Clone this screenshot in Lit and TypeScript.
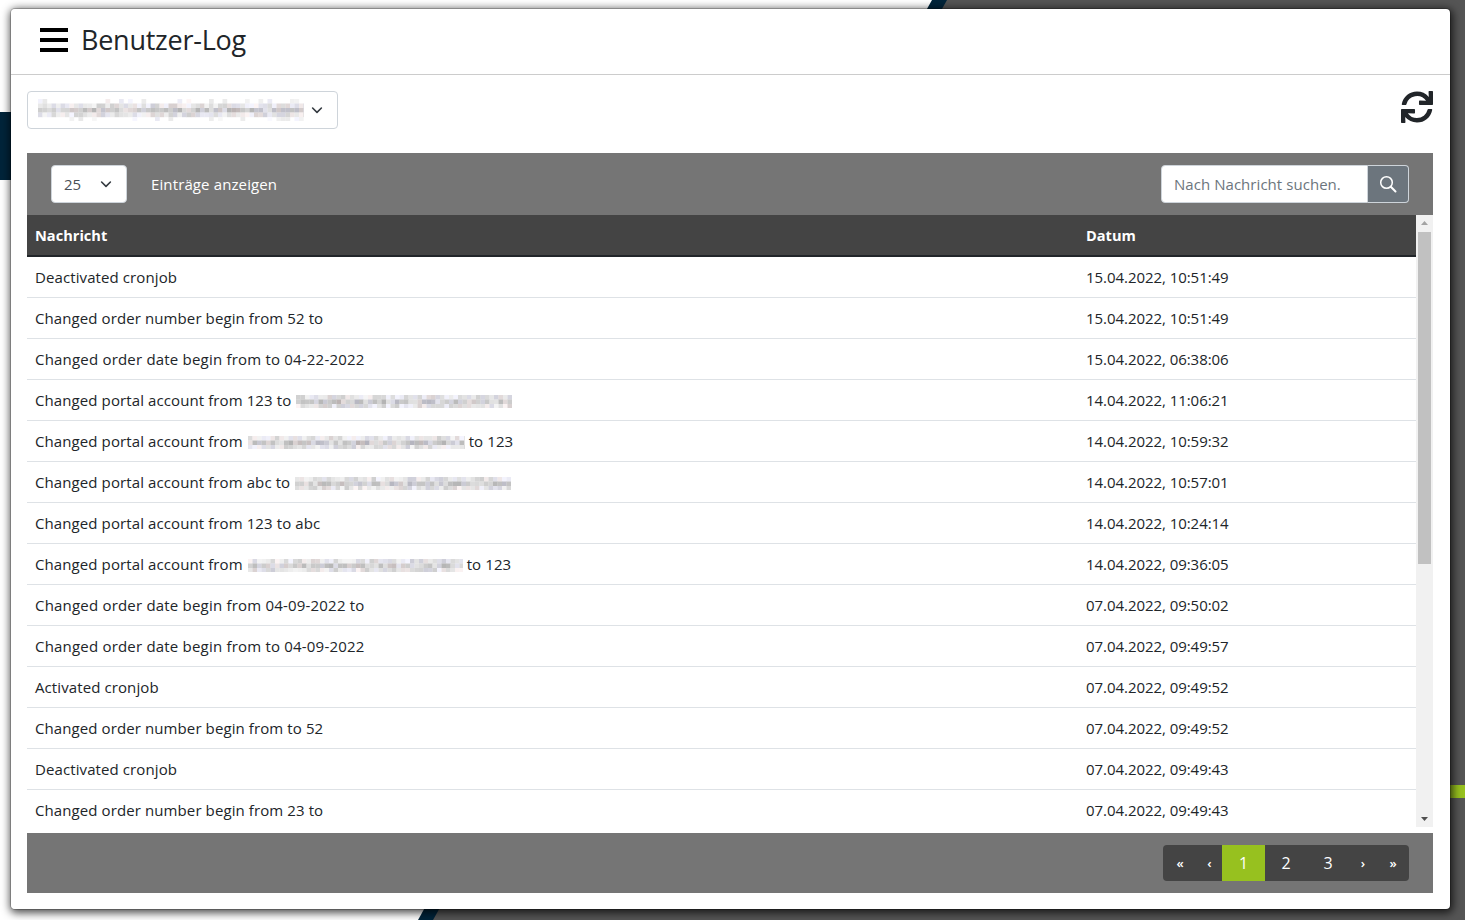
import { LitElement, html, css, svg } from "lit";
import { customElement } from "lit/decorators.js";
import { classMap } from "lit/directives/class-map.js";

type Part = string | { blur: number };
interface Row { m: Part[]; d: string; wide?: boolean }

const ROWS: Row[] = [
  { m: ["Deactivated cronjob"], d: "15.04.2022, 10:51:49" },
  { m: ["Changed order number begin from 52 to"], d: "15.04.2022, 10:51:49" },
  { m: ["Changed order date begin from to 04-22-2022"], d: "15.04.2022, 06:38:06", wide: true },
  { m: ["Changed portal account from 123 to ", { blur: 216 }], d: "14.04.2022, 11:06:21" },
  { m: ["Changed portal account from ", { blur: 217 }, " to 123"], d: "14.04.2022, 10:59:32" },
  { m: ["Changed portal account from abc to ", { blur: 216 }], d: "14.04.2022, 10:57:01" },
  { m: ["Changed portal account from 123 to abc"], d: "14.04.2022, 10:24:14" },
  { m: ["Changed portal account from ", { blur: 215 }, " to 123"], d: "14.04.2022, 09:36:05" },
  { m: ["Changed order date begin from 04-09-2022 to"], d: "07.04.2022, 09:50:02", wide: true },
  { m: ["Changed order date begin from to 04-09-2022"], d: "07.04.2022, 09:49:57", wide: true },
  { m: ["Activated cronjob"], d: "07.04.2022, 09:49:52" },
  { m: ["Changed order number begin from to 52"], d: "07.04.2022, 09:49:52" },
  { m: ["Deactivated cronjob"], d: "07.04.2022, 09:49:43" },
  { m: ["Changed order number begin from 23 to"], d: "07.04.2022, 09:49:43" },
];

function mosaic(width: number, seed: number, rows = 3) {
  let s = seed;
  const rnd = () => {
    s = (s * 1664525 + 1013904223) % 4294967296;
    return s / 4294967296;
  };
  const cell = 4.5;
  const rects = [];
  const mid = (rows - 1) / 2;
  for (let y = 0; y < rows; y++) {
    const dist = Math.abs(y - mid);
    for (let x = 0; x * cell < width; x++) {
      const r = rnd();
      const v = rnd();
      const tint = rnd();
      if (dist >= 2 && r > 0.3) continue;
      const base =
        dist < 0.5 ? 178 + v * 50 : dist <= 1 ? 205 + v * 40 : 232 + v * 18;
      const pink = tint > 0.82 ? 8 : 0;
      const blue = tint < 0.25 ? 10 : 0;
      const c = `rgb(${Math.round(Math.min(255, base + pink))},${Math.round(base)},${Math.round(Math.min(255, base + blue))})`;
      rects.push(svg`<rect x=${x * cell} y=${y * cell} width=${cell + 0.2} height=${cell + 0.2} fill=${c}></rect>`);
    }
  }
  return html`<svg class="mosaic" width=${width} height=${rows * cell} viewBox="0 0 ${width} ${rows * cell}" aria-hidden="true">${rects}</svg>`;
}

const chevron = html`<svg class="chev" viewBox="0 0 16 16" width="16" height="16" aria-hidden="true"><path d="M2.5 5.5 8 11l5.5-5.5" fill="none" stroke="#343a40" stroke-width="2" stroke-linecap="round" stroke-linejoin="round" transform="translate(1.6 1.6) scale(.8)"></path></svg>`;

@customElement("app-root")
export class AppRoot extends LitElement {
  static styles = css`
    :host {
      display: block;
      position: relative;
      width: 1465px;
      height: 920px;
      overflow: hidden;
      background: #fff;
      font-family: "Open Sans", "Liberation Sans", sans-serif;
      font-size: 16px;
      color: #212529;
    }
    .backdrop { position: absolute; inset: 0; display: block; }
    .modal {
      position: absolute;
      left: 10px;
      top: 8px;
      width: 1441px;
      height: 902px;
      box-sizing: border-box;
      background: #fff;
      border: 1px solid rgba(0, 0, 0, 0.2);
      background-clip: padding-box;
      border-radius: 5px;
      box-shadow: 1px 2px 9px 1px rgba(0, 0, 0, 0.7);
      display: flex;
      flex-direction: column;
    }
    .head {
      flex: none;
      height: 66px;
      box-sizing: border-box;
      border-bottom: 1px solid #ccc;
      display: flex;
      align-items: center;
      gap: 13px;
      padding: 0 0 4px 29px;
    }
    .burger { display: block; flex: none; }
    h1 { margin: 0; font-size: 27px; font-weight: 400; line-height: 32px; letter-spacing: -0.25px; color: #212529; }
    .body {
      flex: 1;
      min-height: 0;
      padding: 16px 17px 16px 16px;
      display: flex;
      flex-direction: column;
    }
    .top {
      flex: none;
      display: flex;
      justify-content: space-between;
      align-items: flex-start;
      height: 38px;
      margin-bottom: 24px;
    }
    .sel {
      box-sizing: border-box;
      height: 38px;
      background: #fff;
      border: 1px solid #ced4da;
      border-radius: 4px;
      display: flex;
      align-items: center;
    }
    .site { width: 311px; padding: 0 12px 0 9px; justify-content: space-between; }
    .refresh { display: block; }
    .bar {
      flex: none;
      background: #757575;
      height: 62px;
      box-sizing: border-box;
      padding: 0 24px;
      display: flex;
      align-items: center;
      justify-content: space-between;
    }
    .left { display: flex; align-items: center; gap: 24px; color: #fff; font-size: 15px; letter-spacing: 0.12px; }
    .size { width: 76px; padding: 0 12px; justify-content: space-between; color: #495057; font-size: 15px; letter-spacing: 0; }
    .search { display: flex; height: 38px; width: 248px; }
    .search .input {
      box-sizing: border-box;
      flex: 1;
      background: #fff;
      border: 1px solid #ced4da;
      border-radius: 4px 0 0 4px;
      padding: 0 12px;
      display: flex;
      align-items: center;
      color: #6c757d;
      font-size: 15px;
      letter-spacing: 0.05px;
      white-space: nowrap;
    }
    .search .btn {
      box-sizing: border-box;
      flex: none;
      width: 41px;
      background: #6c757d;
      border: 1px solid #ced4da;
      border-left: none;
      border-radius: 0 4px 4px 0;
      display: flex;
      align-items: center;
      justify-content: center;
    }
    .tablewrap { flex: none; height: 612px; display: flex; margin-bottom: 6px; }
    .view { flex: 1; min-width: 0; overflow: hidden; }
    .row {
      display: grid;
      grid-template-columns: 1051px 1fr;
      height: 41px;
      box-sizing: border-box;
      border-bottom: 1px solid #dee2e6;
      align-items: center;
      font-size: 15px;
    }
    .row > div { padding: 0 8px; white-space: nowrap; }
    .msg { letter-spacing: 0.1px; }
    .msg.wide { letter-spacing: 0.2px; }
    .date { letter-spacing: -0.05px; }
    .row.th {
      height: 42px;
      background: #444;
      color: #fff;
      font-weight: 700;
      font-size: 14.6px;
      border-bottom: 2px solid #212529;
    }
    .mosaic { display: inline-block; vertical-align: -2px; margin-left: 1px; }
    .track {
      flex: none;
      width: 17px;
      background: #f1f1f1;
      display: flex;
      flex-direction: column;
      align-items: center;
    }
    .arrow { flex: none; display: block; }
    .thumbwrap { flex: 1; width: 100%; padding: 0 2px; box-sizing: border-box; }
    .thumb { height: 332px; background: #c1c1c1; }
    .foot {
      flex: none;
      height: 60px;
      background: #757575;
      display: flex;
      align-items: center;
      justify-content: flex-end;
      padding-right: 24px;
    }
    .pager {
      display: flex;
      height: 36px;
      background: #444;
      border-radius: 4px;
      overflow: hidden;
      color: #fff;
    }
    .pager span {
      display: flex;
      align-items: center;
      justify-content: center;
      font-size: 16px;
      height: 36px;
    }
    .pager .num { width: 42px; }
    .pager .on { width: 43px; background: #97c11f; }
    .pager .nav { font-size: 13px; font-weight: 600; }
    .w34 { width: 34px; }
    .w25 { width: 25px; }
    .w28 { width: 28px; }
    .w32 { width: 32px; }
  `;

  render() {
    let seed = 17;
    return html`
      <svg class="backdrop" width="1465" height="920" viewBox="0 0 1465 920" aria-hidden="true">
        <rect width="1465" height="920" fill="#fff"></rect>
        <polygon points="937,0 1465,0 1465,920 422,920" fill="#555"></polygon>
        <polygon points="932,0 947,0 433,920 418,920" fill="#00243a"></polygon>
        <rect x="0" y="112" width="12" height="68" fill="#00243a"></rect>
        <rect x="1448" y="785" width="17" height="13" fill="#97c11f"></rect>
      </svg>
      <div class="modal">
        <div class="head">
          <svg class="burger" width="28" height="24" viewBox="0 0 28 24" aria-hidden="true">
            <rect y="0" width="28" height="4" fill="#000"></rect>
            <rect y="10" width="28" height="4" fill="#000"></rect>
            <rect y="20" width="28" height="4" fill="#000"></rect>
          </svg>
          <h1>Benutzer-Log</h1>
        </div>
        <div class="body">
          <div class="top">
            <div class="sel site">${mosaic(266, 91, 5)}${chevron}</div>
            <svg class="refresh" width="32" height="32" viewBox="0 0 512 512" aria-hidden="true">
              <path fill="#212529" d="M440.65 12.57l4 82.77A247.16 247.16 0 0 0 255.83 8C134.73 8 33.91 94.92 12.29 209.82A12 12 0 0 0 24.09 224h49.05a12 12 0 0 0 11.67-9.26 175.91 175.91 0 0 1 317-56.94l-101.46-4.86a12 12 0 0 0-12.57 12v47.41a12 12 0 0 0 12 12H500a12 12 0 0 0 12-12V12a12 12 0 0 0-12-12h-47.37a12 12 0 0 0-11.98 12.57zM255.83 432a175.61 175.61 0 0 1-146-77.8l101.8 4.87a12 12 0 0 0 12.57-12v-47.4a12 12 0 0 0-12-12H12a12 12 0 0 0-12 12V500a12 12 0 0 0 12 12h47.35a12 12 0 0 0 12-12.6l-4.15-82.57A247.17 247.17 0 0 0 255.83 504c121.11 0 221.93-86.92 243.55-201.82a12 12 0 0 0-11.8-14.18h-49.05a12 12 0 0 0-11.67 9.26A175.86 175.86 0 0 1 255.83 432z"></path>
            </svg>
          </div>
          <div class="bar">
            <div class="left">
              <div class="sel size">25 ${chevron}</div>
              <span>Einträge anzeigen</span>
            </div>
            <div class="search">
              <div class="input">Nach Nachricht suchen.</div>
              <div class="btn">
                <svg width="18" height="18" viewBox="0 0 18 18" aria-hidden="true">
                  <circle cx="7.5" cy="7.5" r="5.8" fill="none" stroke="#fff" stroke-width="1.5"></circle>
                  <path d="M11.8 11.8 16.5 16.5" stroke="#fff" stroke-width="2" stroke-linecap="round"></path>
                </svg>
              </div>
            </div>
          </div>
          <div class="tablewrap">
            <div class="view">
              <div class="row th"><div>Nachricht</div><div>Datum</div></div>
              ${ROWS.map(
                (r) => html`<div class="row">
                  <div class=${classMap({ msg: true, wide: !!r.wide })}>${r.m.map((p) => (typeof p === "string" ? p : mosaic(p.blur, seed++ * 7919)))}</div>
                  <div class="date">${r.d}</div>
                </div>`
              )}
            </div>
            <div class="track">
              <svg class="arrow" width="17" height="17" viewBox="0 0 17 17" aria-hidden="true"><path d="M8.5 6 12 10H5z" fill="#a3a3a3"></path></svg>
              <div class="thumbwrap"><div class="thumb"></div></div>
              <svg class="arrow" width="17" height="17" viewBox="0 0 17 17" aria-hidden="true"><path d="M8.5 11 12 7H5z" fill="#505050"></path></svg>
            </div>
          </div>
          <div class="foot">
            <div class="pager">
              <span class="nav w34">«</span>
              <span class="nav w25">‹</span>
              <span class="on">1</span>
              <span class="num">2</span>
              <span class="num">3</span>
              <span class="nav w28">›</span>
              <span class="nav w32">»</span>
            </div>
          </div>
        </div>
      </div>
    `;
  }
}
